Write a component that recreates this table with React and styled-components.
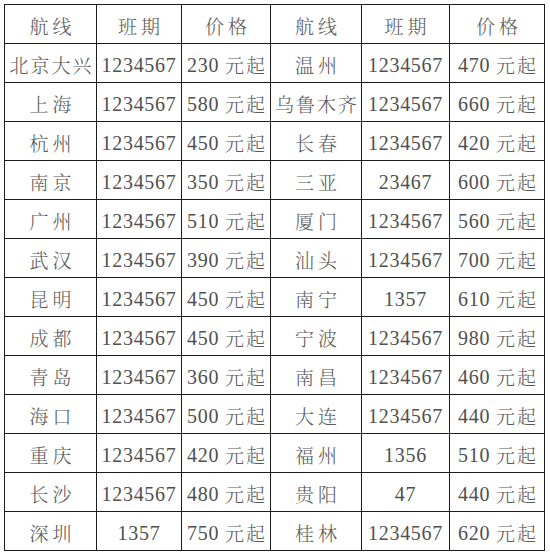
import React from "react";
import styled, { createGlobalStyle } from "styled-components";

const GlobalStyle = createGlobalStyle`
  html, body {
    margin: 0;
    padding: 0;
    background: #fff;
  }
`;

const Page = styled.div`
  padding: 4px 0 0 4px;
  width: 550px;
  height: 553px;
  box-sizing: border-box;
  background: #fff;
`;

const Grid = styled.div`
  display: grid;
  grid-template-columns: 91px 84px 88px 90px 87px 94px;
  grid-auto-rows: 38px;
  gap: 1px;
  padding: 1px;
  width: max-content;
  background: #1c1c1c;
`;

const Cell = styled.div`
  display: flex;
  align-items: center;
  justify-content: center;
  padding-top: 3px;
  box-sizing: border-box;
  background: #fff;
  color: #505050;
  white-space: nowrap;
`;

const Han = styled.span`
  font-family: "Noto Serif CJK SC", "Noto Sans CJK SC", sans-serif;
  font-weight: 300;
  font-size: 19px;
  color: #5a5a5a;
  letter-spacing: ${(p) => (p.$wide ? "4px" : "2px")};
  margin-right: ${(p) => (p.$wide ? "-4px" : "-2px")};
  line-height: 1;
`;

const Num = styled.span`
  font-family: "Liberation Serif", "DejaVu Serif", "Times New Roman", serif;
  font-size: 20px;
  letter-spacing: 0.7px;
  line-height: 1;
`;

const rows = [
  ["北京大兴", "1234567", "230", "温州", "1234567", "470"],
  ["上海", "1234567", "580", "乌鲁木齐", "1234567", "660"],
  ["杭州", "1234567", "450", "长春", "1234567", "420"],
  ["南京", "1234567", "350", "三亚", "23467", "600"],
  ["广州", "1234567", "510", "厦门", "1234567", "560"],
  ["武汉", "1234567", "390", "汕头", "1234567", "700"],
  ["昆明", "1234567", "450", "南宁", "1357", "610"],
  ["成都", "1234567", "450", "宁波", "1234567", "980"],
  ["青岛", "1234567", "360", "南昌", "1234567", "460"],
  ["海口", "1234567", "500", "大连", "1234567", "440"],
  ["重庆", "1234567", "420", "福州", "1356", "510"],
  ["长沙", "1234567", "480", "贵阳", "47", "440"],
  ["深圳", "1357", "750", "桂林", "1234567", "620"],
];

const head = ["航线", "班期", "价格", "航线", "班期", "价格"];

function Price({ value }) {
  return (
    <Cell>
      <Num>{value}&nbsp;</Num>
      <Han>元起</Han>
    </Cell>
  );
}

function Route({ name }) {
  return (
    <Cell>
      <Han $wide={name.length === 2}>{name}</Han>
    </Cell>
  );
}

export default function App() {
  return (
    <Page>
      <GlobalStyle />
      <Grid>
        {head.map((h, i) => (
          <Cell key={"h" + i}>
            <Han $wide>{h}</Han>
          </Cell>
        ))}
        {rows.map((r, i) => (
          <React.Fragment key={i}>
            <Route name={r[0]} />
            <Cell>
              <Num>{r[1]}</Num>
            </Cell>
            <Price value={r[2]} />
            <Route name={r[3]} />
            <Cell>
              <Num>{r[4]}</Num>
            </Cell>
            <Price value={r[5]} />
          </React.Fragment>
        ))}
      </Grid>
    </Page>
  );
}
